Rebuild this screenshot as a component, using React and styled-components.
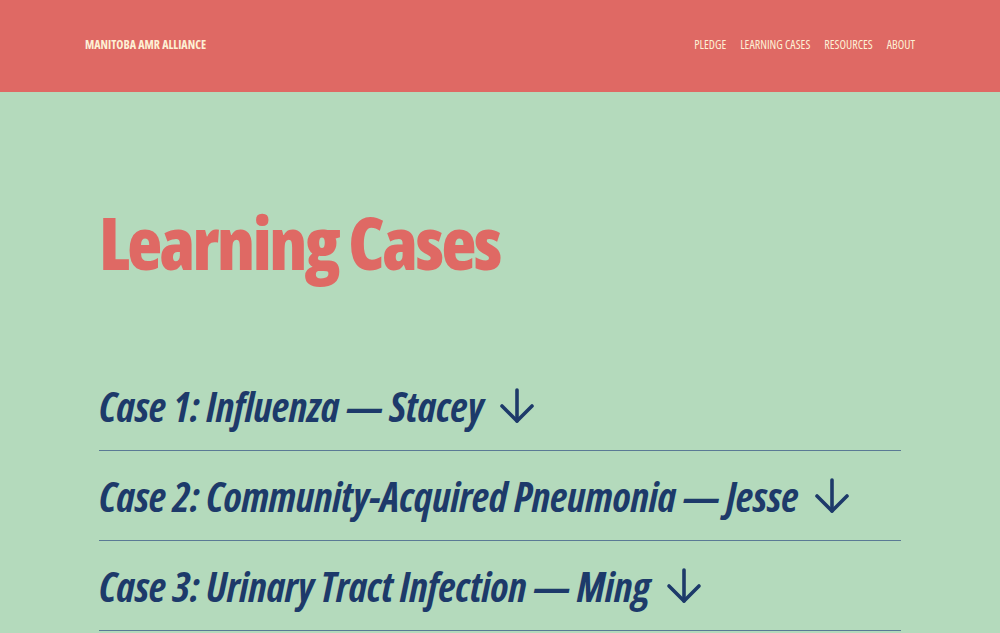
import styled, { createGlobalStyle } from "styled-components"

const GlobalStyle = createGlobalStyle`
    html, body {
        margin: 0;
        padding: 0;
        background: #b4dabc;
    }
    body {
        font-family: "Open Sans", "Roboto", sans-serif;
        font-stretch: condensed;
    }
`;

const cases = [
    "Case 1: Influenza \u2014 Stacey",
    "Case 2: Community-Acquired Pneumonia \u2014 Jesse",
    "Case 3: Urinary Tract Infection \u2014 Ming",
]

function ArrowDown() {
    return (
        <svg width="36" height="36" viewBox="0 0 36 36" fill="none" stroke="#1d3a6a" strokeWidth="3.6" strokeLinecap="round" strokeLinejoin="round">
            <path d="M18 2 V33" />
            <path d="M3 18 L18 33 L33 18" />
        </svg>
    )
}

function App() {
    return (
        <>
            <GlobalStyle />
            <Header>
                <Brand>MANITOBA AMR ALLIANCE</Brand>
                <Nav>
                    <NavLink>PLEDGE</NavLink>
                    <NavLink>LEARNING CASES</NavLink>
                    <NavLink>RESOURCES</NavLink>
                    <NavLink>ABOUT</NavLink>
                </Nav>
            </Header>
            <Main>
                <Title>Learning Cases</Title>
                <CaseList>
                    {cases.map((c) => (
                        <CaseRow key={c}>
                            <CaseTitle>{c}</CaseTitle>
                            <ArrowDown />
                        </CaseRow>
                    ))}
                </CaseList>
            </Main>
        </>
    )
}

export default App


const Header = styled.header`
    height: 92px;
    background: #df6964;
    display: flex;
    align-items: center;
    justify-content: space-between;
    padding: 0 85px 3px;
    box-sizing: border-box;
`;

const Brand = styled.div`
    color: #fdf0d5;
    font-size: 12px;
    font-weight: 700;
`;

const Nav = styled.nav`
    display: flex;
    gap: 14px;
`;

const NavLink = styled.a`
    color: #fdf0d5;
    font-size: 12px;
    font-weight: 500;
    cursor: pointer;
`;

const Main = styled.main`
    padding: 110px 99px 0;
`;

const Title = styled.h1`
    margin: 0;
    color: #df6964;
    font-size: 72px;
    line-height: 80px;
    font-weight: 800;
    letter-spacing: -2.5px;
`;

const CaseList = styled.div`
    margin-top: 79px;
`;

const CaseRow = styled.div`
    height: 90px;
    box-sizing: border-box;
    border-bottom: 1px solid #5a7a95;
    display: flex;
    align-items: center;
    gap: 16px;
`;

const CaseTitle = styled.h2`
    margin: 0;
    color: #1d3a6a;
    font-size: 41px;
    font-weight: 700;
    font-style: italic;
    letter-spacing: -0.3px;
`;
